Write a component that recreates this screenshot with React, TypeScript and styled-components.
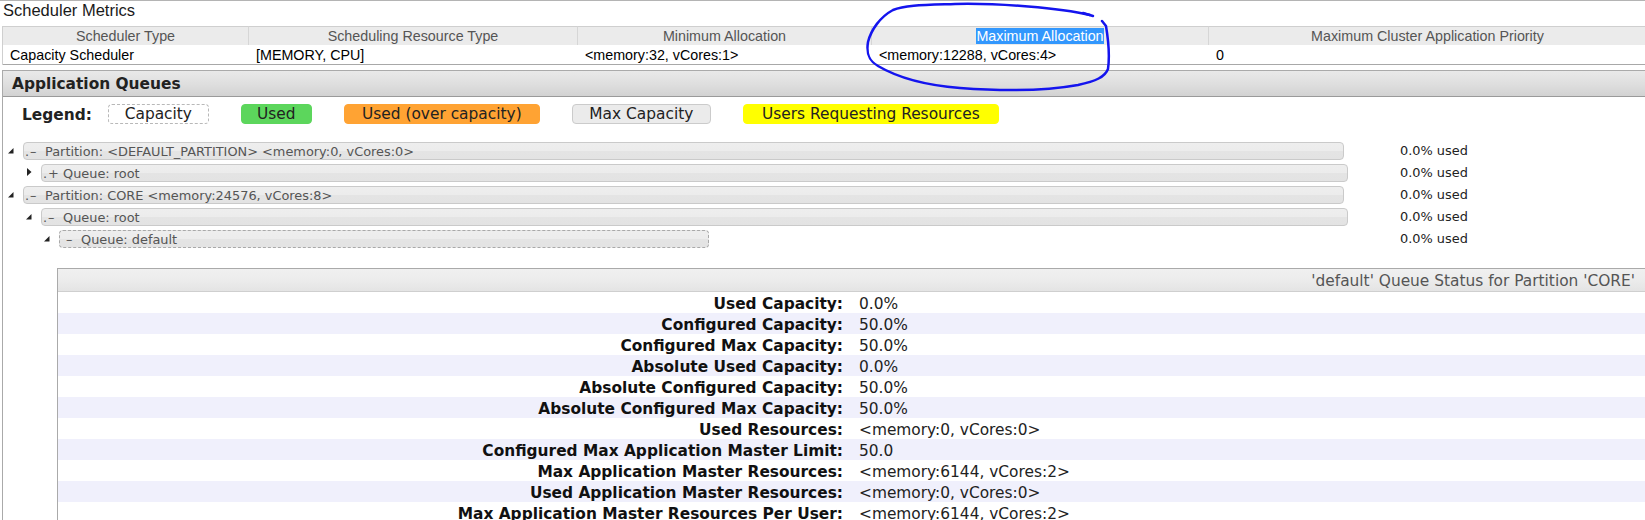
import React from "react";
import styled, { createGlobalStyle, css } from "styled-components";

const GlobalStyle = createGlobalStyle`
  html, body { margin: 0; padding: 0; background: #fff; overflow: hidden; }
  body { font-family: "Liberation Sans", Arial, sans-serif; }
  * { box-sizing: border-box; }
`;

const ARIAL = `"Liberation Sans", Arial, sans-serif`;
const VERDANA = `"DejaVu Sans", Verdana, Tahoma, sans-serif`;

const Page = styled.div`
  position: relative;
  width: 1645px;
  height: 520px;
  overflow: hidden;
  border-top: 1px solid #b4b4b4;
  padding-left: 2px;
`;

const SectionTitle = styled.h2`
  margin: 0 0 6px 1px;
  font: normal 16.5px/19px ${ARIAL};
  color: #1a1a1a;
`;

const MetricsGrid = styled.div`
  display: grid;
  grid-template-columns: 246px 329px 294px 337px 437px;
  border-left: 1px solid #cfcfcf;
  font: 14.3px/18px ${ARIAL};
`;

const HeadCell = styled.div<{ $last?: boolean }>`
  height: 19px;
  border-top: 1px solid #cfcfcf;
  border-right: ${(p) => (p.$last ? "none" : "1px solid #d6d6d6")};
  background: #ebebeb;
  color: #555;
  text-align: center;
  white-space: nowrap;
`;

const DataCell = styled.div`
  height: 20px;
  line-height: 20px;
  border-bottom: 1px solid #a8a8a8;
  padding-left: 7px;
  color: #000;
  white-space: nowrap;
`;

const Selected = styled.span`
  background: #3297fd;
  color: #fff;
`;

const QueuesPanel = styled.section`
  margin-top: 5px;
  width: 1660px;
  height: 460px;
  border-left: 1px solid #aaa;
`;

const PanelHeader = styled.h3`
  margin: 0;
  height: 27px;
  border-top: 1px solid #aaa;
  border-bottom: 1px solid #9a9a9a;
  background: linear-gradient(to bottom, #e9e9e9 0%, #dedede 55%, #d2d2d2 100%);
  padding: 2px 0 0 9px;
  font: bold 15.4px/23px ${VERDANA};
  color: #222;
`;

const Legend = styled.div`
  margin-top: 7px;
  height: 20px;
  display: flex;
  align-items: center;
  padding-left: 19px;
`;

const LegendLabel = styled.span`
  font: bold 15.4px/20px ${VERDANA};
  padding-top: 2px;
  color: #222;
  margin-right: 16px;
`;

const LegendItems = styled.div`
  display: flex;
  gap: 32px;
`;

type LegendKind = "capacity" | "used" | "over" | "max" | "users";

const legendLook: Record<LegendKind, ReturnType<typeof css>> = {
  capacity: css`background: #fff; border: 1px dashed #b8b8b8;`,
  used: css`background: #5cd65c; border: 1px solid #5cd65c;`,
  over: css`background: #ffa333; border: 1px solid #ffa333;`,
  max: css`background: #ebebeb; border: 1px solid #cbcbcb;`,
  users: css`background: #ffff00; border: 1px solid #ffff00;`,
};

const LegendBox = styled.span<{ $kind: LegendKind; $w: number }>`
  display: inline-block;
  width: ${(p) => p.$w}px;
  height: 20px;
  border-radius: 4px;
  padding-top: 1px;
  text-align: center;
  font: 15.4px/17px ${VERDANA};
  color: #222;
  white-space: nowrap;
  ${(p) => legendLook[p.$kind]}
`;

const Tree = styled.div`
  margin-top: 16px;
  padding-left: 2px;
`;

const TreeRow = styled.div`
  display: grid;
  grid-template-columns: 1395px auto;
  align-items: center;
  height: 22px;
`;

const NodeCell = styled.div<{ $level: number }>`
  display: flex;
  align-items: center;
  padding-left: ${(p) => p.$level * 18}px;
`;

const Toggle = styled.span<{ $open: boolean }>`
  width: 18px;
  flex: none;
  display: flex;
  align-items: center;
  padding-left: ${(p) => (p.$open ? 3 : 4)}px;
  margin-bottom: ${(p) => (p.$open ? 1 : 3)}px;
  color: #222;
`;

const Bar = styled.div<{ $w: number; $leaf?: boolean }>`
  width: ${(p) => p.$w}px;
  height: 18px;
  flex: none;
  border: 1px ${(p) => (p.$leaf ? "dashed #a9a9a9" : "solid #cacaca")};
  border-radius: 4px;
  background: linear-gradient(to bottom, #eeeeee 0%, #ececec 48%, #e4e4e4 52%, #e3e3e3 100%);
  padding-left: 1px;
  font: 12.9px/17px ${VERDANA};
  color: #555;
  white-space: nowrap;
  overflow: hidden;
`;

const Dot = styled.span<{ $hidden?: boolean }>`
  display: inline-block;
  width: 5px;
  visibility: ${(p) => (p.$hidden ? "hidden" : "visible")};
`;

const Sign = styled.span`
  display: inline-block;
  width: 15px;
`;

const Pct = styled.span`
  font: 12.9px/22px ${VERDANA};
  color: #222;
  white-space: nowrap;
`;

const StatusTable = styled.div`
  margin: 18px 0 0 54px;
  width: 1588px;
  border-left: 1px solid #aaa;
  border-top: 1px solid #aaa;
  font: 15.4px ${VERDANA};
`;

const StatusHeader = styled.div`
  height: 23px;
  border-bottom: 1px solid #cfcfcf;
  background: linear-gradient(to bottom, #f0f0f0 0%, #ececec 50%, #e4e4e4 100%);
  padding: 2px 10px 0 0;
  line-height: 20px;
  text-align: right;
  color: #555;
  white-space: nowrap;
`;

const StatusRow = styled.div`
  display: grid;
  grid-template-columns: 790px 1fr;
  height: 21px;
  padding-top: 4px;
  line-height: 17px;
  background: #fff;
  &:nth-child(odd) {
    background: #f0f0fc;
  }
`;

const StatusLabel = styled.span`
  text-align: right;
  padding-right: 5px;
  font-weight: bold;
  color: #111;
  white-space: nowrap;
`;

const StatusValue = styled.span`
  padding-left: 11px;
  color: #222;
  white-space: nowrap;
`;

const Annotation = styled.svg`
  position: absolute;
  top: -1px;
  left: 0;
  pointer-events: none;
`;

const Triangle = ({ open }: { open: boolean }) =>
  open ? (
    <svg width="6" height="6" viewBox="0 0 6 6">
      <polygon points="5.5,0 5.5,5.5 0,5.5" fill="currentColor" />
    </svg>
  ) : (
    <svg width="5" height="8" viewBox="0 0 5 8">
      <polygon points="0,0 4.5,4 0,8" fill="currentColor" />
    </svg>
  );

type Node = {
  level: number;
  open: boolean;
  sign: string;
  text: string;
  width: number;
  leaf?: boolean;
};

const nodes: Node[] = [
  { level: 0, open: true, sign: "–", text: "Partition: <DEFAULT_PARTITION> <memory:0, vCores:0>", width: 1321 },
  { level: 1, open: false, sign: "+", text: "Queue: root", width: 1307 },
  { level: 0, open: true, sign: "–", text: "Partition: CORE <memory:24576, vCores:8>", width: 1321 },
  { level: 1, open: true, sign: "–", text: "Queue: root", width: 1307 },
  { level: 2, open: true, sign: "–", text: "Queue: default", width: 650, leaf: true },
];

const stats: [string, string][] = [
  ["Used Capacity:", "0.0%"],
  ["Configured Capacity:", "50.0%"],
  ["Configured Max Capacity:", "50.0%"],
  ["Absolute Used Capacity:", "0.0%"],
  ["Absolute Configured Capacity:", "50.0%"],
  ["Absolute Configured Max Capacity:", "50.0%"],
  ["Used Resources:", "<memory:0, vCores:0>"],
  ["Configured Max Application Master Limit:", "50.0"],
  ["Max Application Master Resources:", "<memory:6144, vCores:2>"],
  ["Used Application Master Resources:", "<memory:0, vCores:0>"],
  ["Max Application Master Resources Per User:", "<memory:6144, vCores:2>"],
];

const legend: { kind: LegendKind; w: number; label: string }[] = [
  { kind: "capacity", w: 101, label: "Capacity" },
  { kind: "used", w: 71, label: "Used" },
  { kind: "over", w: 196, label: "Used (over capacity)" },
  { kind: "max", w: 139, label: "Max Capacity" },
  { kind: "users", w: 256, label: "Users Requesting Resources" },
];

export default function App() {
  return (
    <>
      <GlobalStyle />
      <Page>
        <SectionTitle>Scheduler Metrics</SectionTitle>
        <MetricsGrid>
          <HeadCell>Scheduler Type</HeadCell>
          <HeadCell>Scheduling Resource Type</HeadCell>
          <HeadCell>Minimum Allocation</HeadCell>
          <HeadCell>
            <Selected>Maximum Allocation</Selected>
          </HeadCell>
          <HeadCell $last>Maximum Cluster Application Priority</HeadCell>
          <DataCell>Capacity Scheduler</DataCell>
          <DataCell>[MEMORY, CPU]</DataCell>
          <DataCell>{"<memory:32, vCores:1>"}</DataCell>
          <DataCell>{"<memory:12288, vCores:4>"}</DataCell>
          <DataCell>0</DataCell>
        </MetricsGrid>

        <QueuesPanel>
          <PanelHeader>Application Queues</PanelHeader>
          <Legend>
            <LegendLabel>Legend:</LegendLabel>
            <LegendItems>
              {legend.map((l) => (
                <LegendBox key={l.kind} $kind={l.kind} $w={l.w}>
                  {l.label}
                </LegendBox>
              ))}
            </LegendItems>
          </Legend>

          <Tree>
            {nodes.map((n, i) => (
              <TreeRow key={i}>
                <NodeCell $level={n.level}>
                  <Toggle $open={n.open}>
                    <Triangle open={n.open} />
                  </Toggle>
                  <Bar $w={n.width} $leaf={n.leaf}>
                    <Dot $hidden={n.leaf}>.</Dot>
                    <Sign>{n.sign}</Sign>
                    {n.text}
                  </Bar>
                </NodeCell>
                <Pct>0.0% used</Pct>
              </TreeRow>
            ))}
          </Tree>

          <StatusTable>
            <StatusHeader>'default' Queue Status for Partition 'CORE'</StatusHeader>
            {stats.map(([k, v]) => (
              <StatusRow key={k}>
                <StatusLabel>{k}</StatusLabel>
                <StatusValue>{v}</StatusValue>
              </StatusRow>
            ))}
          </StatusTable>
        </QueuesPanel>

        <Annotation width="1645" height="520" viewBox="0 0 1645 520">
          <path
            d="M 1090 15 C 1060 8, 1000 3, 955 4 C 925 5, 905 5, 893 10 C 880 17, 871 30, 868 42 C 866 54, 869 61, 878 66 C 895 76, 922 85, 960 88 C 1000 91, 1045 91, 1078 85 C 1096 81, 1105 77, 1108 69 C 1110 55, 1108 38, 1106 26 L 1102 21"
            fill="none"
            stroke="#1414ee"
            strokeWidth="2.5"
            strokeLinecap="round"
            strokeLinejoin="round"
          />
          <path d="M 1083 13 L 1093 16" fill="none" stroke="#1414ee" strokeWidth="2.5" strokeLinecap="round" />
        </Annotation>
      </Page>
    </>
  );
}
